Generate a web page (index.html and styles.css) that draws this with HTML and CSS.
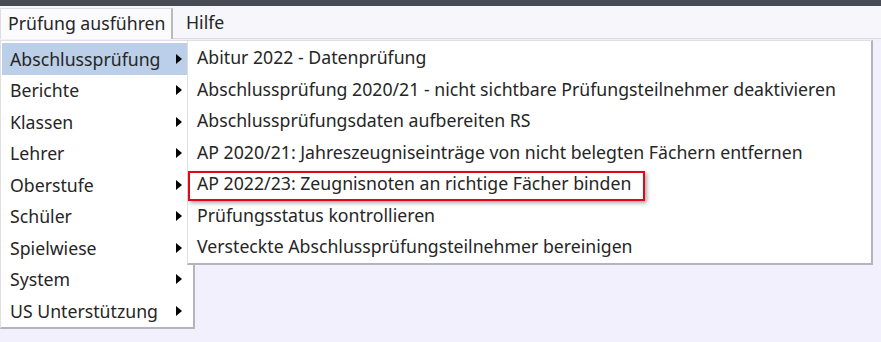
FILE: index.html
```html
<!DOCTYPE html>
<html lang="de">
<head>
<meta charset="utf-8">
<title>Prüfung ausführen</title>
<link rel="stylesheet" href="styles.css">
</head>
<body>
<div class="titlebar"></div>
<div class="menubar">
  <div class="mb-item open">Prüfung ausführen</div>
  <div class="mb-item">Hilfe</div>
</div>
<div class="menus">
  <div class="menu main">
    <div class="mi active"><span>Abschlussprüfung</span><i class="arrow"></i></div>
    <div class="mi"><span>Berichte</span><i class="arrow"></i></div>
    <div class="mi"><span>Klassen</span><i class="arrow"></i></div>
    <div class="mi"><span>Lehrer</span><i class="arrow"></i></div>
    <div class="mi"><span>Oberstufe</span><i class="arrow"></i></div>
    <div class="mi"><span>Schüler</span><i class="arrow"></i></div>
    <div class="mi"><span>Spielwiese</span><i class="arrow"></i></div>
    <div class="mi"><span>System</span><i class="arrow"></i></div>
    <div class="mi"><span>US Unterstützung</span><i class="arrow"></i></div>
  </div>
  <div class="menu sub">
    <div class="si">Abitur 2022 - Datenprüfung</div>
    <div class="si">Abschlussprüfung 2020/21 - nicht sichtbare Prüfungsteilnehmer deaktivieren</div>
    <div class="si">Abschlussprüfungsdaten aufbereiten RS</div>
    <div class="si">AP 2020/21: Jahreszeugniseinträge von nicht belegten Fächern entfernen</div>
    <div class="si">AP 2022/23: Zeugnisnoten an richtige Fächer binden</div>
    <div class="si">Prüfungsstatus kontrollieren</div>
    <div class="si">Versteckte Abschlussprüfungsteilnehmer bereinigen</div>
  </div>
  <div class="highlight-box"></div>
</div>
</body>
</html>
```
FILE: styles.css
```css
html, body {
  margin: 0;
  padding: 0;
}
body {
  background: #f1f0fc;
  font-family: "Noto Sans", "Open Sans", sans-serif;
  font-size: 17.7px;
  color: #262626;
  width: 881px;
  height: 342px;
  overflow: hidden;
}
.titlebar {
  height: 6px;
  background: #474c54;
}
.menubar {
  height: 32px;
  background: #f7f6fa;
  border-bottom: 1px solid #d9d9e1;
  display: flex;
  align-items: flex-end;
}
.mb-item {
  height: 30px;
  line-height: 28px;
  padding: 0 8px 0 7px;
  box-sizing: border-box;
  white-space: nowrap;
}
.mb-item.open {
  width: 173px;
  height: 31px;
  padding-right: 0;
  border: 1px solid #dcdce2;
  border-right: 2px solid #b9b9c0;
  border-bottom: none;
  background: #fbfbfd;
  margin-bottom: -1px;
}
.mb-item + .mb-item {
  margin-left: 6px;
}
.menus {
  position: relative;
  display: flex;
  align-items: flex-start;
  padding-top: 1px;
}
.menu {
  background: #fff;
  box-sizing: border-box;
}
.main {
  width: 195px;
  border: 1px solid #dedee4;
  border-right: 2px solid #b4b4bb;
  border-bottom: 2px solid #b4b4bb;
  padding: 2px 6px 0 1px;
}
.mi {
  height: 31.5px;
  display: flex;
  align-items: center;
  justify-content: space-between;
  padding: 0 5px 0 8px;
  white-space: nowrap;
}
.mi.active {
  background: #bbcfe9;
  margin-right: -6px;
  padding-right: 11px;
}
.arrow {
  width: 0;
  height: 0;
  border-top: 5px solid transparent;
  border-bottom: 5px solid transparent;
  border-left: 6px solid #000;
}
.sub {
  margin-left: -8px;
  width: 686px;
  border: 1px solid #dedee4;
  border-right: 2px solid #b4b4bb;
  border-bottom: 2px solid #b4b4bb;
  padding: 1px 0 0 0;
}
.si {
  height: 31.5px;
  line-height: 31.5px;
  padding-left: 9px;
  white-space: nowrap;
}
.highlight-box {
  position: absolute;
  left: 188px;
  top: 132px;
  width: 457px;
  height: 30px;
  box-sizing: border-box;
  border: 2px solid #e30613;
  box-shadow: 2px 2px 4px rgba(0, 0, 0, 0.35);
}
```
